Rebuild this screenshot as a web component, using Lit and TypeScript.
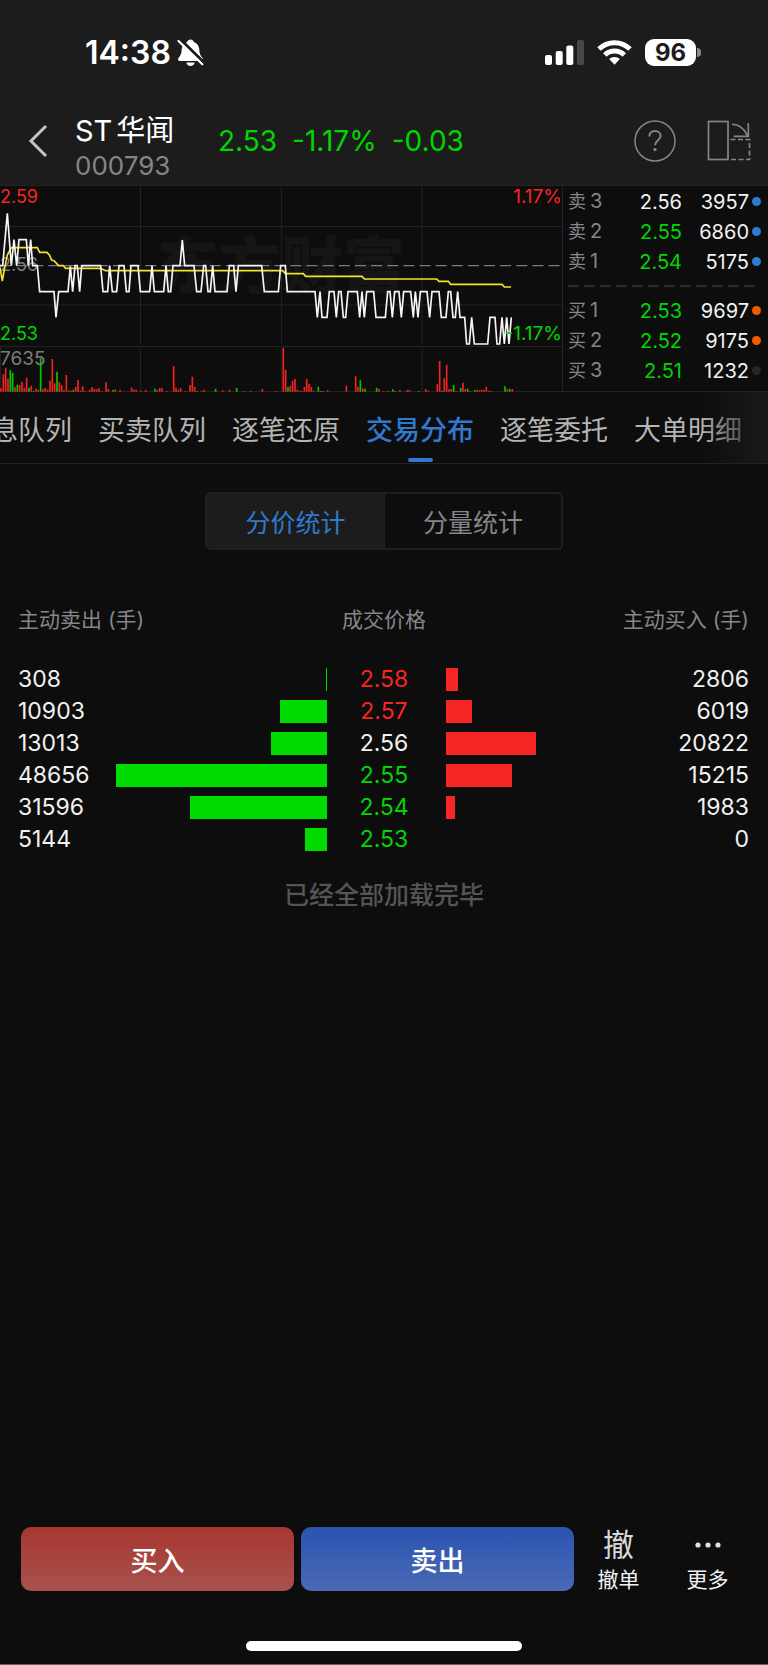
import { LitElement, html, css, svg } from "lit";
import { customElement, property, state } from "lit/decorators.js";
import { classMap } from "lit/directives/class-map.js";
import { styleMap } from "lit/directives/style-map.js";

type Tone = "up" | "down" | "flat";

const reset = css`
  :host {
    display: block;
    box-sizing: border-box;
  }
  *,
  *::before,
  *::after {
    box-sizing: border-box;
  }
  button {
    appearance: none;
    border: 0;
    margin: 0;
    padding: 0;
    background: none;
    color: inherit;
    font: inherit;
    cursor: pointer;
  }
  svg {
    display: block;
  }
  .up {
    color: #f82424;
  }
  .down {
    color: #00d600;
  }
  .flat {
    color: #f2f2f2;
  }
`;

@customElement("status-bar")
class StatusBar extends LitElement {
  static styles = [
    reset,
    css`
      :host {
        height: 100px;
        padding: 6px 67px 0 85px;
        display: flex;
        align-items: center;
        justify-content: space-between;
        color: #fff;
      }
      .group {
        display: flex;
        align-items: center;
      }
      .time {
        font-size: 32px;
        line-height: 36px;
        font-weight: 600;
        margin-right: 6px;
      }
      .right {
        gap: 13px;
        padding-bottom: 2px;
      }
      .battery {
        display: flex;
        align-items: center;
        gap: 1px;
      }
      .cell {
        width: 51px;
        height: 27px;
        border-radius: 9px;
        background: #fff;
        color: #1c1c1c;
        font-size: 24px;
        line-height: 27px;
        font-weight: 700;
        text-align: center;
      }
      .nub {
        width: 4px;
        height: 9px;
        border-radius: 0 4px 4px 0;
        background: #8a8a8a;
      }
    `,
  ];

  render() {
    return html`
      <div class="group">
        <span class="time">14:38</span>
        <svg width="27" height="28" viewBox="0 0 27 28" aria-hidden="true">
          <path
            fill="#fff"
            d="M13.5 .6c1.7 0 2.9 1 3.3 2.4 3.6 1.1 5.3 4.2 5.5 7.8.2 3.700 1 5.700 3 8 .9 1.100 1 3.200-1 3.200H2.700c-2 0-1.900-2.100-1-3.200 2-2.300 2.800-4.300 3-8C4.900 7.200 6.600 4.100 10.200 3 10.600 1.600 11.800.6 13.500.6Z"
          />
          <path fill="#fff" d="M9.300 23.600h8.400c-.4 2-2 3.400-4.200 3.400s-3.800-1.400-4.200-3.400Z" />
          <path d="M3.500.5 28 24.500" stroke="#1c1c1c" stroke-width="3" />
          <path d="M1.500 2 25.300 25.300" stroke="#fff" stroke-width="2.200" stroke-linecap="round" />
        </svg>
      </div>
      <div class="group right">
        <svg width="39" height="25" viewBox="0 0 39 25" aria-hidden="true">
          <rect x="0" y="15" width="7" height="10" rx="2" fill="#fff" />
          <rect x="10.700" y="11" width="7" height="14" rx="2" fill="#fff" />
          <rect x="21.300" y="5.500" width="7" height="19.500" rx="2" fill="#fff" />
          <rect x="32" y="0" width="7" height="25" rx="2" fill="#484848" />
        </svg>
        <svg width="35" height="25" viewBox="0 0 35 25" aria-hidden="true">
          <g fill="none" stroke="#fff">
            <path d="M2 9a22.200 22.200 0 0 1 31 0" stroke-width="5" />
            <path d="M7.800 15a13.900 13.900 0 0 1 19.400 0" stroke-width="5" />
          </g>
          <path d="M12.100 19.100a7.800 7.800 0 0 1 10.800 0L17.500 24.800Z" fill="#fff" />
        </svg>
        <div class="battery">
          <span class="cell">96</span>
          <span class="nub"></span>
        </div>
      </div>
    `;
  }
}

@customElement("stock-header")
class StockHeader extends LitElement {
  static styles = [
    reset,
    css`
      :host {
        display: flex;
        height: 86px;
        padding: 0 17px 3px 27px;
        align-items: flex-end;
        border-bottom: 1px solid #242424;
      }
      .back,
      .quote,
      .tools {
        height: 82px;
        display: flex;
        align-items: center;
      }
      .back {
        width: 48px;
      }
      .names {
        width: 143px;
      }
      .title {
        margin: 0;
        display: flex;
        gap: 4px;
        font-size: 29px;
        line-height: 36px;
        font-weight: 400;
        color: #fff;
      }
      .code {
        font-size: 26px;
        line-height: 33px;
        color: #85858a;
      }
      .quote {
        gap: 15px;
        font-size: 28px;
        flex: 1;
      }
      .tools {
        gap: 31px;
      }
    `,
  ];

  render() {
    return html`
      <button class="back" aria-label="返回">
        <svg width="22" height="36" viewBox="0 0 22 36">
          <path d="M19 3 4 18l15 15" fill="none" stroke="#c4c4c4" stroke-width="3" />
        </svg>
      </button>
      <div class="names">
        <h1 class="title"><span>ST</span><span>华闻</span></h1>
        <div class="code">000793</div>
      </div>
      <div class="quote down">
        <span>2.53</span><span>-1.17%</span><span>-0.03</span>
      </div>
      <div class="tools">
        <button aria-label="帮助">
          <svg width="42" height="42" viewBox="0 0 42 42" fill="none" stroke="#858585">
            <circle cx="21" cy="21" r="20" stroke-width="1.500" />
            <path d="M15.400 16.500c0-3.500 2.300-5.500 5.600-5.500s5.600 2 5.600 5c0 4-5.600 4.600-5.600 9.200" stroke-width="2" />
            <circle cx="21" cy="29.600" r="1.700" fill="#858585" stroke="none" />
          </svg>
        </button>
        <button aria-label="切换横屏">
          <svg width="44" height="42" viewBox="0 0 44 42" fill="none" stroke="#858585" stroke-width="1.700">
            <rect x="1.500" y="1.500" width="19.500" height="38" />
            <path d="M25 4.200c7 .3 12 3.700 15.500 11.500M41.300 3v13.300H26.700" />
            <path d="M23.500 19.500h19v20H23" stroke-dasharray="5 2.500" />
          </svg>
        </button>
      </div>
    `;
  }
}

/* Plot space: one minute is 7 units wide, 241 minutes in a session. */
const PRICE_LINE =
  "0,257 8,257 22,100 34,257 42,179 50,257 57,179 79,179 85,257 92,179 98,257 112,257 119,335 162,335 168,412 176,335 204,335 211,259 218,335 225,257 232,257 239,335 245,257 302,257 309,335 323,335 329,257 337,335 350,335 357,257 372,257 379,335 387,335 393,257 414,257 421,335 449,335 456,257 463,335 491,335 498,257 505,335 512,335 519,257 540,257 547,180 554,257 582,257 590,335 603,335 611,257 617,257 624,335 631,335 638,257 645,335 681,335 688,257 701,257 708,335 715,257 785,257 793,335 835,335 842,257 856,257 862,335 945,335 952,412 960,335 966,412 981,412 988,335 1002,335 1009,412 1016,335 1023,335 1030,412 1037,412 1044,335 1072,335 1079,412 1086,335 1093,412 1100,335 1121,335 1128,412 1156,412 1163,335 1170,335 1177,412 1184,335 1197,335 1204,412 1211,335 1232,335 1240,412 1246,335 1254,412 1261,335 1281,335 1289,412 1296,335 1317,335 1324,412 1338,412 1345,335 1352,335 1359,412 1366,412 1373,335 1380,412 1394,412 1400,492 1408,492 1415,412 1423,492 1463,492 1470,412 1485,412 1491,492 1499,492 1506,412 1513,492 1520,412 1527,492 1534,412";

const AVERAGE_LINE =
  "0,262 7,303 14,262 22,225 34,203 112,203 119,217 141,217 148,225 155,240 162,242 176,257 190,257 197,265 302,265 316,272 848,272 856,281 910,281 917,289 1086,289 1093,297 1310,297 1317,304 1345,304 1352,313 1506,313 1513,321 1533,321";

const RISING =
  "3:10 10:52 17:72 24:38 45:14 59:20 66:30 73:12 80:42 94:18 108:9 115:6 129:8 136:11 143:6 150:33 157:98 164:25 178:28 185:20 192:4 199:50 206:4 213:3 227:14 234:35 241:3 248:16 255:2 269:6 276:14 283:9 290:7 297:10 304:2 318:28 325:8 346:7 360:5 395:12 402:6 409:6 423:3 437:5 472:4 479:11 486:11 500:2 521:76 528:12 535:6 542:11 556:2 570:20 577:45 584:15 605:3 612:6 668:4 689:6 731:2 752:2 787:8 829:2 850:132 857:66 871:18 878:33 885:38 892:6 899:3 906:2 913:14 920:38 927:24 934:14 941:3 969:2 983:4 1039:18 1067:46 1074:15 1088:10 1137:8 1151:2 1165:2 1200:5 1221:5 1228:5 1277:8 1284:3 1312:22 1319:92 1333:40 1340:81 1347:7 1354:8 1368:2 1389:27 1396:8 1410:2 1431:6 1438:4 1445:6 1452:5 1459:15 1466:3 1473:2 1522:7 1537:8";

const FALLING =
  "31:65 38:57 52:21 87:12 101:2 122:100 171:60 220:6 339:5 465:9 591:2 647:9 710:11 864:14 955:15 962:2 1081:34 1095:9 1130:12 1179:7 1186:2 1256:2 1326:3 1361:20 1382:11 1403:9 1424:5 1515:16 1529:9";

const volumePath = (series: string) =>
  series
    .split(" ")
    .map((entry) => entry.split(":").map(Number))
    .map(([x, h]) => `M${x} 635v${-h}`)
    .join("");

@customElement("minute-chart")
class MinuteChart extends LitElement {
  static styles = [
    reset,
    css`
      :host {
        position: relative;
        height: 206px;
        overflow: hidden;
        font-size: 18px;
        line-height: 20px;
      }
      .plot {
        position: relative;
        width: 100%;
        height: 100%;
      }
      .mark {
        position: absolute;
        inset: 37px 0 auto;
        text-align: center;
        font-size: 62px;
        line-height: 88px;
        font-weight: 900;
        color: #151515;
      }
      .label {
        position: absolute;
        left: 0;
      }
      .end {
        left: auto;
        right: 0;
        font-size: 19px;
      }
      .top {
        top: 1px;
      }
      .middle {
        top: 69px;
      }
      .low {
        top: 138px;
      }
      .volume {
        top: 163px;
        font-size: 19px;
      }
      .muted {
        color: #7c7c80;
      }
    `,
  ];

  render() {
    return html`
      <div class="mark" aria-hidden="true">东方财富</div>
      <span class="label middle muted">2.56</span>
      <span class="label volume muted">7635</span>
      <svg class="plot" viewBox="0 18 1686 618" preserveAspectRatio="none" fill="none">
        ${svg`
          <g stroke="#222222" stroke-width="3">
            <path d="M421.500 20v472M844 20v472M1266 20v472M421.500 504v130M844 504v130M1266 504v130" />
            <path d="M0 139.500h1686M0 375h1686M0 499.500h1686M0 634.500h1686M1.500 499v136" />
          </g>
          <path d="M0 257H1680" stroke="#7d7a83" stroke-width="4" stroke-dasharray="33 15.400" />
          <path d=${volumePath(RISING)} stroke="#f02222" stroke-width="5" />
          <path d=${volumePath(FALLING)} stroke="#00c800" stroke-width="5" />
          <polyline points=${AVERAGE_LINE} stroke="#f3e22f" stroke-width="5" />
          <polyline points=${PRICE_LINE} stroke="#f6f6f6" stroke-width="5" />
        `}
      </svg>
      <span class="label top up">2.59</span>
      <span class="label low down">2.53</span>
      <span class="label end top up">1.17%</span>
      <span class="label end low down">-1.17%</span>
    `;
  }
}

interface Level {
  side: string;
  step: number;
  price: string;
  lots: number;
  tone: Tone;
  dot: string;
}

const SELLS: Level[] = [
  { side: "卖", step: 3, price: "2.56", lots: 3957, tone: "flat", dot: "blue" },
  { side: "卖", step: 2, price: "2.55", lots: 6860, tone: "down", dot: "blue" },
  { side: "卖", step: 1, price: "2.54", lots: 5175, tone: "down", dot: "blue" },
];
const BUYS: Level[] = [
  { side: "买", step: 1, price: "2.53", lots: 9697, tone: "down", dot: "orange" },
  { side: "买", step: 2, price: "2.52", lots: 9175, tone: "down", dot: "orange" },
  { side: "买", step: 3, price: "2.51", lots: 1232, tone: "down", dot: "gray" },
];

@customElement("order-book")
class OrderBook extends LitElement {
  static styles = [
    reset,
    css`
      :host {
        height: 206px;
        border-left: 1px solid #242424;
        border-bottom: 1px solid #242424;
        font-size: 20px;
        line-height: 30px;
      }
      .row {
        display: grid;
        grid-template-columns: 40px 1fr 64px 9px;
        column-gap: 3px;
        align-items: center;
        height: 30px;
        padding: 0 7px 0 5px;
      }
      .side {
        display: flex;
        align-items: baseline;
        gap: 4px;
        color: #85858a;
      }
      .word {
        font-size: 18px;
      }
      .price,
      .lots {
        text-align: right;
      }
      .lots {
        color: #f2f2f2;
      }
      .dot {
        width: 9px;
        height: 9px;
        border-radius: 50%;
      }
      .blue {
        background: #3278cc;
      }
      .orange {
        background: #f05a00;
      }
      .gray {
        background: #262626;
      }
      .rule {
        height: 19px;
        padding: 0 10px 0 5px;
        display: flex;
        align-items: center;
      }
    `,
  ];

  private row(level: Level) {
    return html`
      <div class="row">
        <span class="side"><span class="word">${level.side}</span><span>${level.step}</span></span>
        <span class=${classMap({ price: true, [level.tone]: true })}>${level.price}</span>
        <span class="lots">${level.lots}</span>
        <span class=${classMap({ dot: true, [level.dot]: true })}></span>
      </div>
    `;
  }

  render() {
    return html`
      ${SELLS.map((level) => this.row(level))}
      <div class="rule">
        <svg width="100%" height="2" aria-hidden="true">
          <path d="M0 1h1000" stroke="#2c2c2c" stroke-width="2" stroke-dasharray="11 5" />
        </svg>
      </div>
      ${BUYS.map((level) => this.row(level))}
    `;
  }
}

@customElement("detail-tabs")
class DetailTabs extends LitElement {
  static styles = [
    reset,
    css`
      :host {
        position: relative;
        height: 72px;
        border-bottom: 1px solid #222222;
        overflow: hidden;
      }
      .tabs {
        height: 100%;
        display: flex;
        justify-content: flex-end;
        gap: 26px;
        padding-right: 26px;
      }
      .tab {
        flex: none;
        display: grid;
        grid-template-rows: 1fr 4px;
        justify-items: center;
        align-items: center;
        padding: 6px 0 1px;
        font-size: 27px;
        color: #b4b4b4;
      }
      .tab::after {
        content: "";
        width: 25px;
        height: 4px;
        border-radius: 2px;
      }
      .active {
        color: #3079cd;
        font-weight: 500;
      }
      .active::after {
        background: #3079cd;
      }
      .fade {
        position: absolute;
        inset: 0 0 0 auto;
        width: 68px;
        background: linear-gradient(90deg, rgba(25, 25, 28, 0), #19191c);
        pointer-events: none;
      }
    `,
  ];

  @state() private current = "交易分布";
  private names = ["息队列", "买卖队列", "逐笔还原", "交易分布", "逐笔委托", "大单明细"];

  render() {
    return html`
      <div class="tabs" role="tablist">
        ${this.names.map(
          (name) => html`
            <button
              role="tab"
              aria-selected=${name === this.current}
              class=${classMap({ tab: true, active: name === this.current })}
              @click=${() => (this.current = name)}
            >${name}</button>
          `
        )}
      </div>
      <div class="fade"></div>
    `;
  }
}

@customElement("mode-switch")
class ModeSwitch extends LitElement {
  static styles = [
    reset,
    css`
      :host {
        display: flex;
        justify-content: center;
        padding-top: 28px;
      }
      .box {
        display: grid;
        grid-template-columns: 1fr 1fr;
        width: 358px;
        height: 58px;
        border: 2px solid #1f1f1f;
        border-radius: 5px;
        overflow: hidden;
      }
      .option {
        padding-bottom: 1px;
        font-size: 25px;
        color: #85858a;
      }
      .option + .option {
        border-left: 1px solid #212121;
      }
      .active {
        background: #1c1c1c;
        color: #3079cd;
      }
    `,
  ];

  @state() private current = "分价统计";

  render() {
    return html`
      <div class="box">
        ${["分价统计", "分量统计"].map(
          (name) => html`
            <button
              aria-pressed=${name === this.current}
              class=${classMap({ option: true, active: name === this.current })}
              @click=${() => (this.current = name)}
            >${name}</button>
          `
        )}
      </div>
    `;
  }
}

interface Trade {
  sold: number;
  price: string;
  bought: number;
  tone: Tone;
}

const TRADES: Trade[] = [
  { sold: 308, price: "2.58", bought: 2806, tone: "up" },
  { sold: 10903, price: "2.57", bought: 6019, tone: "up" },
  { sold: 13013, price: "2.56", bought: 20822, tone: "flat" },
  { sold: 48656, price: "2.55", bought: 15215, tone: "down" },
  { sold: 31596, price: "2.54", bought: 1983, tone: "down" },
  { sold: 5144, price: "2.53", bought: 0, tone: "down" },
];

@customElement("trade-table")
class TradeTable extends LitElement {
  static styles = [
    reset,
    css`
      table {
        width: 100%;
        table-layout: fixed;
        border-collapse: collapse;
        margin-top: 54px;
        font-size: 23px;
        line-height: 32px;
        color: #f2f2f2;
      }
      .sold-col {
        width: 116px;
      }
      .price-col {
        width: 119px;
      }
      .bought-col {
        width: 111px;
      }
      th,
      td {
        padding: 0;
        font-weight: 400;
      }
      th {
        height: 32px;
        font-size: 21px;
        line-height: 32px;
        color: #85858a;
      }
      thead::after {
        content: "";
        display: block;
        height: 27px;
      }
      .sold {
        padding-left: 18px;
        text-align: left;
      }
      .price {
        padding-right: 5px;
        text-align: center;
      }
      .bought {
        padding-right: 19px;
        text-align: right;
      }
      .bar {
        height: 23px;
      }
      .green {
        margin-left: auto;
        background: #00db00;
      }
      .red {
        background: #f62626;
      }
      .done {
        margin: 22px 0 0;
        text-align: center;
        font-size: 25px;
        line-height: 36px;
        font-weight: 500;
        color: #555555;
      }
    `,
  ];

  @property({ attribute: false }) trades: Trade[] = TRADES;

  render() {
    const peak = Math.max(...this.trades.flatMap((t) => [t.sold, t.bought]));
    const width = (lots: number) => styleMap({ width: `${(lots / peak) * 100}%` });
    return html`
      <table>
        <colgroup>
          <col class="sold-col" />
          <col />
          <col class="price-col" />
          <col />
          <col class="bought-col" />
        </colgroup>
        <thead>
          <tr>
            <th class="sold" colspan="2">主动卖出 (手)</th>
            <th class="price">成交价格</th>
            <th class="bought" colspan="2">主动买入 (手)</th>
          </tr>
        </thead>
        <tbody>
          ${this.trades.map(
            (t) => html`
              <tr>
                <td class="sold">${t.sold}</td>
                <td><div class="bar green" style=${width(t.sold)}></div></td>
                <td class=${classMap({ price: true, [t.tone]: true })}>${t.price}</td>
                <td><div class="bar red" style=${width(t.bought)}></div></td>
                <td class="bought">${t.bought}</td>
              </tr>
            `
          )}
        </tbody>
      </table>
      <p class="done">已经全部加载完毕</p>
    `;
  }
}

@customElement("trade-actions")
class TradeActions extends LitElement {
  static styles = [
    reset,
    css`
      .actions {
        display: grid;
        grid-template-columns: 1fr 89px 89px;
        padding: 0 16px 0 21px;
      }
      .mains {
        display: grid;
        grid-template-columns: 1fr 1fr;
        gap: 7px;
      }
      .main {
        height: 64px;
        border-radius: 10px;
        font-size: 27px;
        font-weight: 500;
        color: #fff;
      }
      .buy {
        background: linear-gradient(#a83630, #a8524e);
      }
      .sell {
        background: linear-gradient(#2954b0, #4c69b5);
      }
      .side {
        display: grid;
        grid-template-rows: 36px 34px;
        justify-items: center;
        align-items: center;
        font-size: 21px;
        line-height: 34px;
        color: #f2f2f2;
      }
      .glyph {
        font-size: 31px;
        line-height: 36px;
        color: #d8d8d8;
      }
      .home {
        width: 36%;
        height: 10px;
        margin: 44px auto 13px;
        border-radius: 5px;
        background: #fff;
      }
      .edge {
        height: 1px;
        background: #666666;
      }
    `,
  ];

  render() {
    return html`
      <div class="actions">
        <div class="mains">
          <button class="main buy">买入</button>
          <button class="main sell">卖出</button>
        </div>
        <button class="side"><span class="glyph">撤</span><span>撤单</span></button>
        <button class="side">
          <svg width="28" height="8" viewBox="0 0 28 8" fill="#e0e0e0" aria-hidden="true">
            <circle cx="4" cy="4" r="2.600" />
            <circle cx="14" cy="4" r="2.600" />
            <circle cx="24" cy="4" r="2.600" />
          </svg>
          <span>更多</span>
        </button>
      </div>
      <div class="home"></div>
      <div class="edge"></div>
    `;
  }
}

@customElement("app-root")
class AppRoot extends LitElement {
  static styles = [
    reset,
    css`
      :host {
        display: flex;
        flex-direction: column;
        min-height: 100vh;
        background: #0d0d0d;
        color: #f2f2f2;
        font-family: Inter, "Noto Sans CJK SC", sans-serif;
      }
      .head {
        background: #1c1c1c;
      }
      .market {
        display: grid;
        grid-template-columns: 281fr 103fr;
      }
      .content {
        flex: 1;
      }
    `,
  ];

  render() {
    return html`
      <header class="head">
        <status-bar></status-bar>
        <stock-header></stock-header>
      </header>
      <section class="market">
        <minute-chart></minute-chart>
        <order-book></order-book>
      </section>
      <detail-tabs></detail-tabs>
      <main class="content">
        <mode-switch></mode-switch>
        <trade-table></trade-table>
      </main>
      <trade-actions></trade-actions>
    `;
  }
}
